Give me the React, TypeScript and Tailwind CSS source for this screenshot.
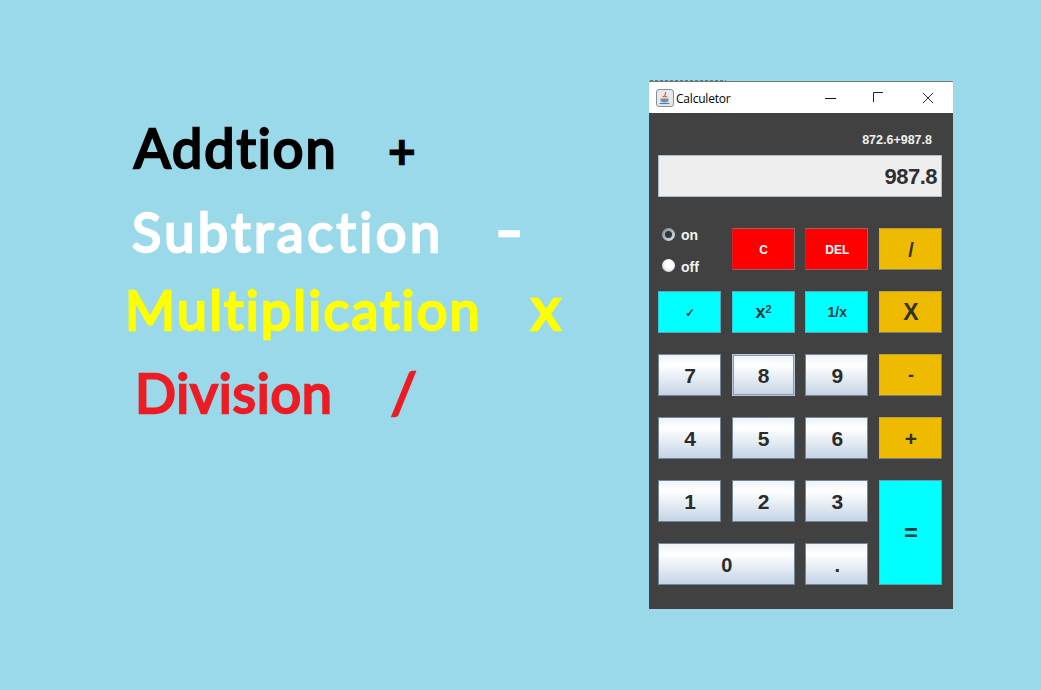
import React from "react";

const num = "bg-[linear-gradient(to_bottom,#eef3f8_0%,#ffffff_25%,#e4ebf3_60%,#c4d4e6_100%)] border border-[#74879a] text-[#2b2b2b]";
const cyan = "bg-[#00ffff] border border-[#5f9fae] border-l-[#35c8d8] text-[#1f3a3f]";
const red = "bg-[#ff0000] border border-[#94626a] border-l-[#d81c24] text-white";
const gold = "bg-[#efbb00] border border-[#80807a] border-l-[#e0b418] border-t-[#b8a040] text-[#33301f]";

function Key({ label, cls, size = "text-[21px]", extra = "" }: { label: React.ReactNode; cls: string; size?: string; extra?: string }) {
  return (
    <div className={`flex items-center justify-center pl-[1px] pt-[1px] font-bold ${size} ${cls} ${extra}`}>{label}</div>
  );
}

function Radio({ on, label, drop }: { on?: boolean; label: string; drop: string }) {
  return (
    <div className="flex h-[32px] shrink-0 items-center gap-[6px] text-[14px] font-bold text-[#f2f2f2]">
      <div className={`flex h-[13px] w-[13px] items-center justify-center rounded-full ${on ? "bg-[linear-gradient(135deg,#7d8894,#dfe6ee)]" : "bg-[radial-gradient(circle_at_60%_40%,#ffffff_40%,#aab6c4_100%)]"} ${drop}`}>
        {on && <div className="h-[7px] w-[7px] rounded-full bg-[#2f353c]" />}
      </div>
      <span>{label}</span>
    </div>
  );
}

function Line({ text, op, color, cls, gap, opCls = "" }: { text: string; op: string; color: string; cls: string; gap: string; opCls?: string }) {
  return (
    <div className={`flex items-baseline font-normal leading-none whitespace-nowrap [-webkit-text-stroke:2.5px_currentColor] ${color} ${cls}`}>
      <span>{text}</span>
      <span className={`${gap} ${opCls}`}>{op}</span>
    </div>
  );
}

export default function App() {
  return (
    <div className="flex h-[690px] w-[1041px] overflow-hidden bg-[#9ad9ea] font-['Liberation_Sans',Arial,sans-serif]">
      <div className="flex w-[649px] flex-col pl-[125px] pt-[121px] font-['Lato',sans-serif]">
        <Line text="Addtion" op="+" color="text-black" cls="ml-[9px] text-[54px] tracking-[2px]" gap="ml-[51px]" opCls="text-[46px]" />
        <Line text="Subtraction" op="-" color="text-white" cls="ml-[7px] mt-[24px] text-[54px] tracking-[3.5px]" gap="ml-[54px]" opCls="tracking-normal text-[60px] scale-x-125" />
        <Line text="Multiplication" op="x" color="text-[#ffff00]" cls="mt-[18px] text-[54px] tracking-[2.2px]" gap="ml-[49px]" opCls="text-[60px]" />
        <Line text="Division" op="/" color="text-[#ed1c24]" cls="ml-[10px] mt-[26px] text-[54px] tracking-[0.8px]" gap="ml-[58px]" opCls="text-[57px]" />
      </div>
      <div className="relative mt-[81px] flex h-[528px] w-[304px] flex-col border-t border-[#777] bg-[#414141]">
        <div className="absolute -top-[2px] left-[1px] h-[1px] w-[76px] bg-[repeating-linear-gradient(to_right,#3d5860_0_3px,transparent_3px_5px)] opacity-70" />
        <div className="flex h-[31px] items-center bg-white pl-[7px] text-black">
          <svg width="18" height="18" viewBox="0 0 18 18" className="shrink-0">
            <rect x="0.5" y="0.500" width="17" height="17" rx="2.500" fill="#e6e8ea" stroke="#8a8f96" />
            <path d="M9.500 3c1 1.500-1.500 2.200-.5 4M7 7c-.5 1 4 1 4 0" stroke="#d9641e" strokeWidth="1.200" fill="none" />
            <path d="M4.500 9.500h8v1.500c0 1.800-1.700 2.500-4 2.500s-4-.7-4-2.500z" fill="#6f8fb0" />
            <path d="M3.500 14.500h10" stroke="#5a7ea5" strokeWidth="1.200" />
          </svg>
          <span className="ml-[2px] w-[57px] translate-y-[1px] font-['Open_Sans',sans-serif] text-[12px] leading-none tracking-[-0.2px]">Calculetor</span>
          <svg width="12" height="12" viewBox="0 0 12 12" className="ml-[92px] shrink-0"><path d="M0 6.500h11" stroke="#111" /></svg>
          <svg width="12" height="12" viewBox="0 0 12 12" className="ml-[36px] -translate-y-[1px] shrink-0"><path d="M.5 11V1.500H10" stroke="#222" fill="none" /></svg>
          <svg width="12" height="12" viewBox="0 0 12 12" className="ml-[37px] shrink-0"><path d="M1 1l10 10M11 1L1 11" stroke="#333" /></svg>
        </div>
        <div className="flex flex-col px-[9px] pt-[19px]">
          <div className="pr-[12px] text-right text-[12.5px] font-bold leading-[16px] text-[#f0f0f0]">872.6+987.8</div>
          <div className="mt-[7px] flex h-[42px] w-[284px] items-center justify-end border border-[#a9bdd0] bg-[#eeeeee] pr-[4px] pt-[1px] text-[22px] font-bold tracking-[-0.5px] text-[#2f2f33]">987.8</div>
          <div className="mt-[31px] grid grid-cols-[63px_63px_63px_63px] grid-rows-[42px_42px_42px_42px_42px_42px] gap-x-[10.67px] gap-y-[21px]">
            <div className="-mt-[9px] flex flex-col pl-[4px]">
              <Radio on label="on" drop="-translate-y-[1px]" />
              <Radio label="off" drop="-translate-y-[2px]" />
            </div>
            <Key label="C" cls={red} size="text-[12px]" />
            <Key label="DEL" cls={red} size="text-[12px]" />
            <Key label="/" cls={gold} size="text-[20px]" />
            <Key label="✓" cls={cyan} size="text-[12px]" />
            <Key label={<span>x<sup className="text-[11px]">2</sup></span>} cls={cyan} size="text-[18px]" />
            <Key label="1/x" cls={cyan} size="text-[14px]" />
            <Key label="X" cls={gold} size="text-[23px]" />
            <Key label="7" cls={num} />
            <Key label="8" cls={num} extra="outline outline-1 -outline-offset-2 outline-[#8a9bb0] border-[#b9c9dc]" />
            <Key label="9" cls={num} />
            <Key label="-" cls={gold} size="text-[18px]" />
            <Key label="4" cls={num} />
            <Key label="5" cls={num} />
            <Key label="6" cls={num} />
            <Key label="+" cls={gold} />
            <Key label="1" cls={num} />
            <Key label="2" cls={num} />
            <Key label="3" cls={num} />
            <Key label="=" cls={cyan} extra="row-span-2" size="text-[24px]" />
            <Key label="0" cls={num} extra="col-span-2" size="text-[20px]" />
            <Key label="." cls={num} size="text-[20px]" />
          </div>
        </div>
      </div>
    </div>
  );
}
